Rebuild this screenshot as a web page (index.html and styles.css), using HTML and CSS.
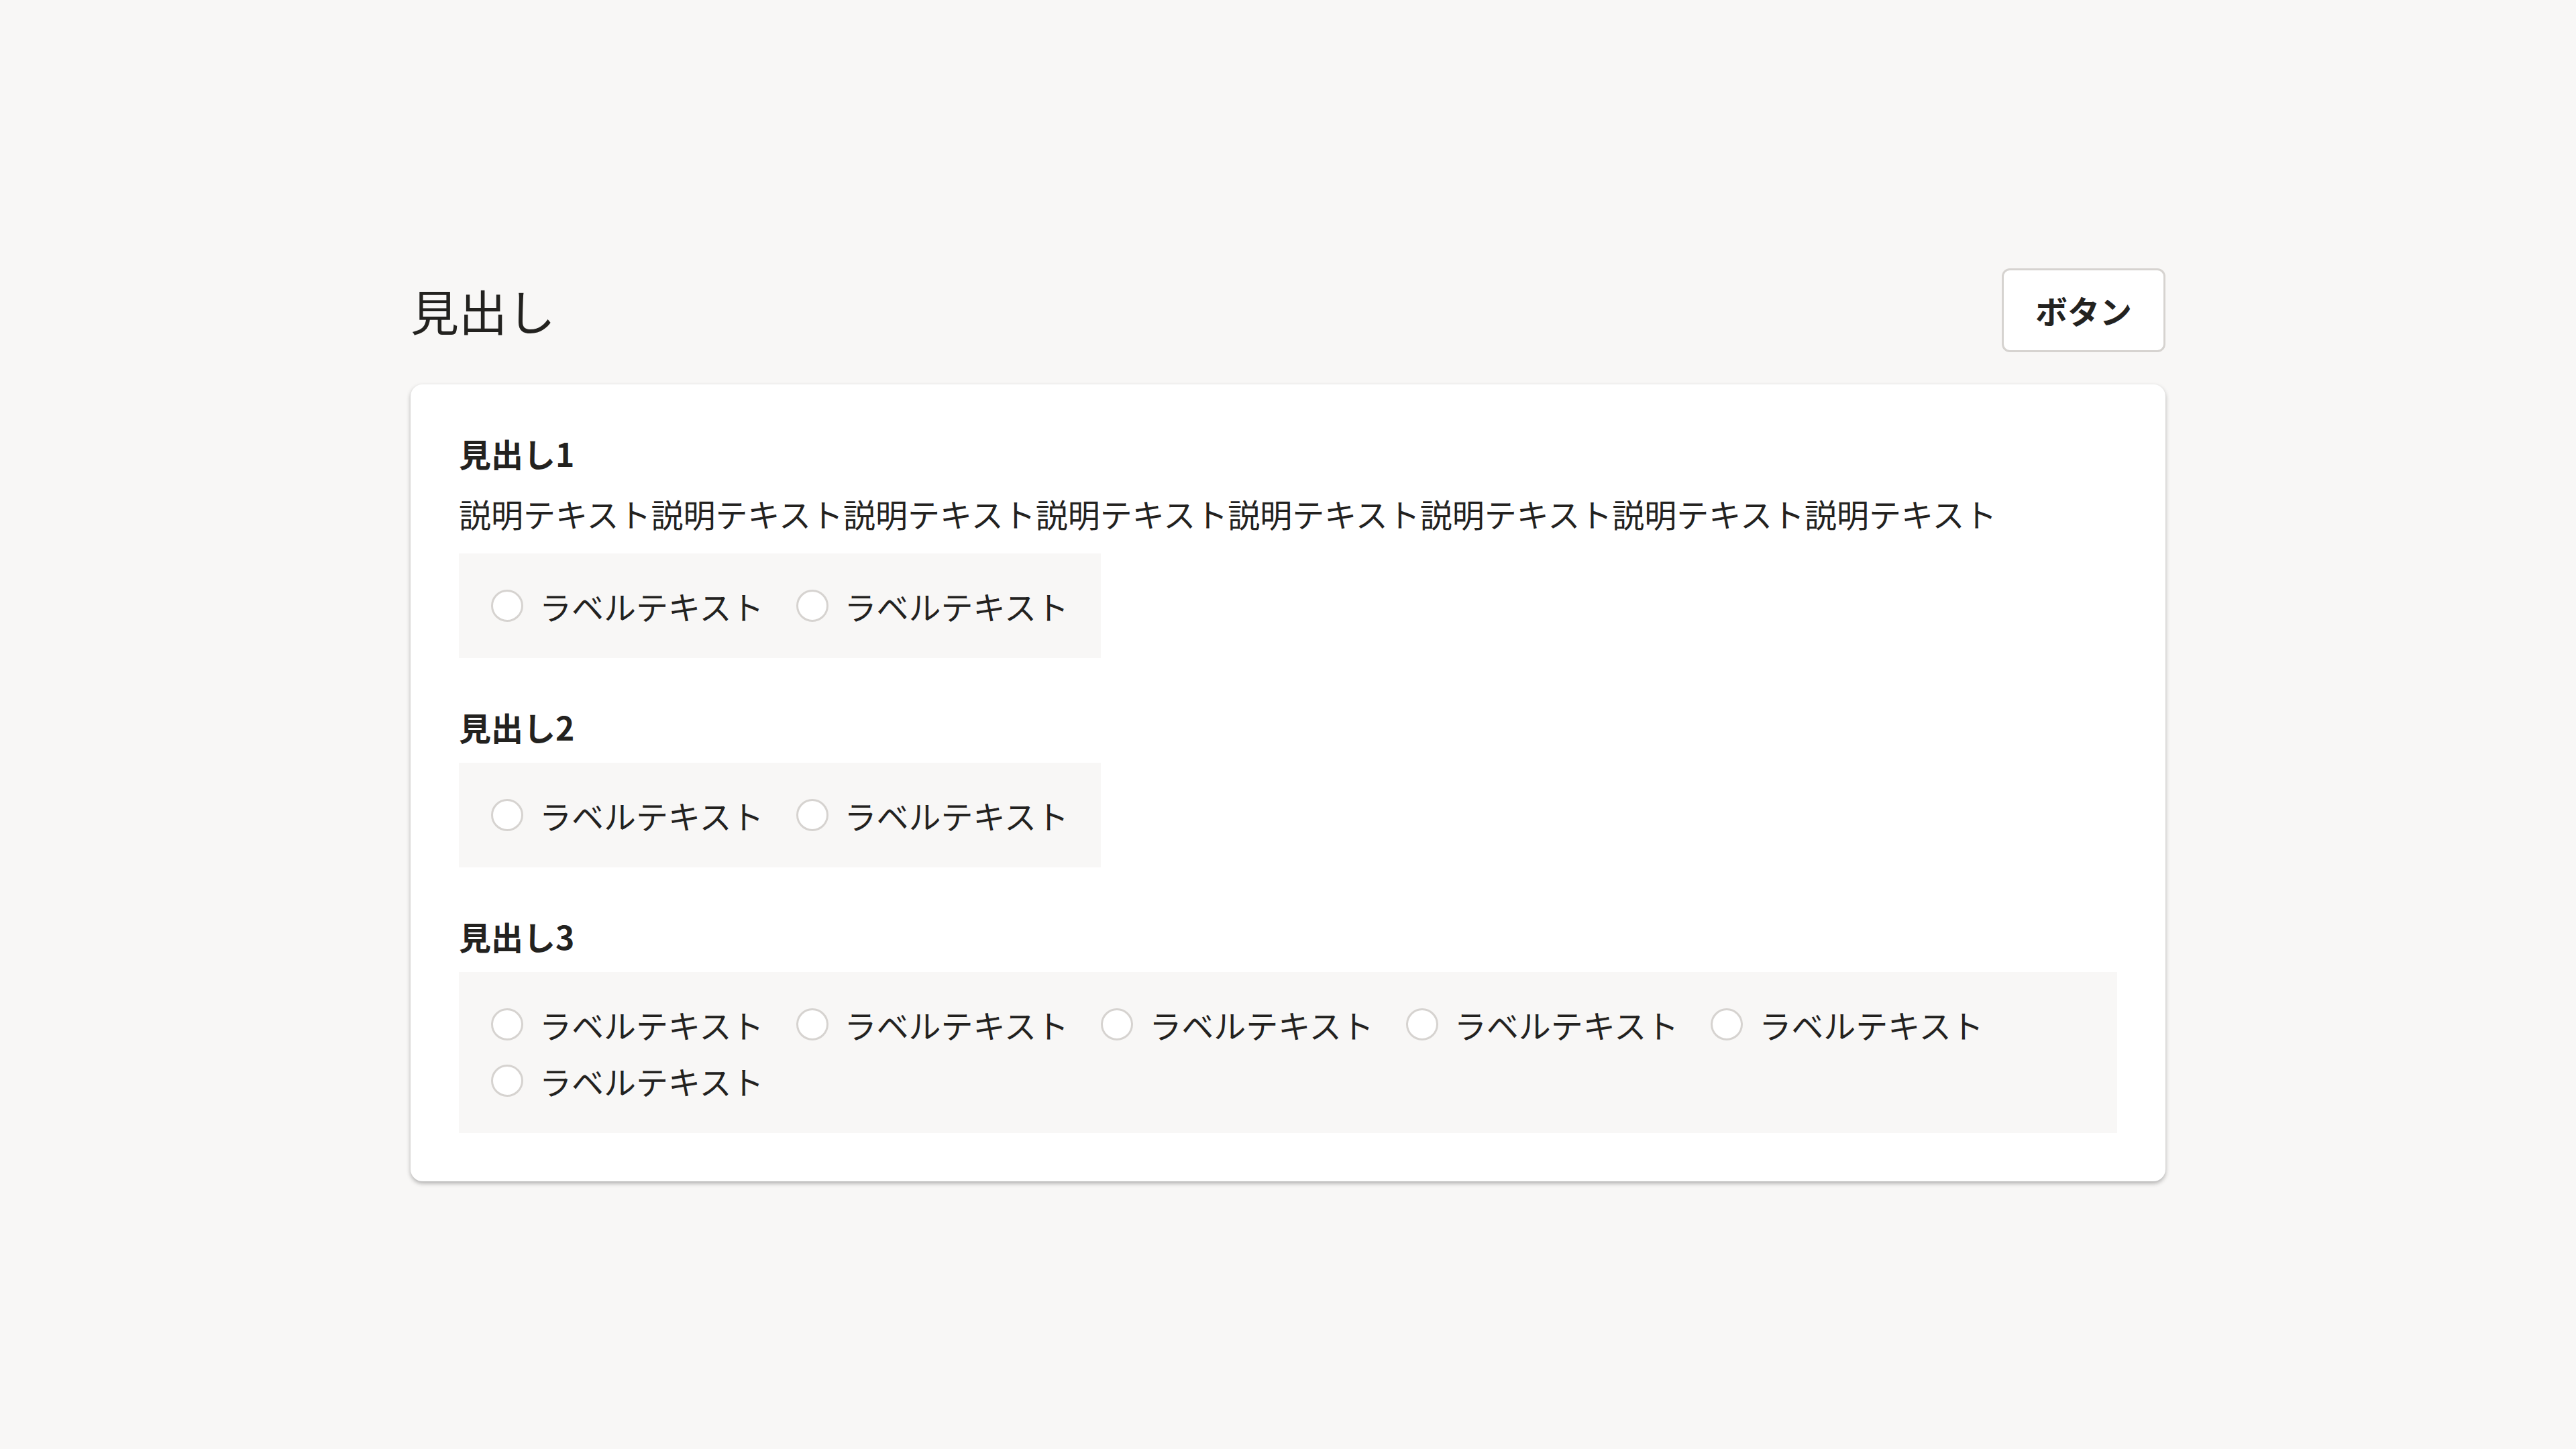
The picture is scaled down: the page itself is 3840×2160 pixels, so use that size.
FILE: index.html
```html
<!DOCTYPE html>
<html lang="ja">
<head>
    <meta charset="UTF-8">
    <meta name="viewport" content="width=device-width, initial-scale=1.0">
    <title>見出し</title>
    <link rel="stylesheet" href="styles.css">
</head>
<body>
    <div class="page">
        <div class="container">
            <div class="page-header">
                <h1>見出し</h1>
                <button type="button" class="button">ボタン</button>
            </div>

            <div class="card">
                <section class="section">
                    <h2>見出し1</h2>
                    <p class="description">説明テキスト説明テキスト説明テキスト説明テキスト説明テキスト説明テキスト説明テキスト説明テキスト</p>
                    <div class="radio-group">
                        <label class="radio"><input type="radio" name="q1"><span>ラベルテキスト</span></label>
                        <label class="radio"><input type="radio" name="q1"><span>ラベルテキスト</span></label>
                    </div>
                </section>

                <section class="section">
                    <h2>見出し2</h2>
                    <div class="radio-group">
                        <label class="radio"><input type="radio" name="q2"><span>ラベルテキスト</span></label>
                        <label class="radio"><input type="radio" name="q2"><span>ラベルテキスト</span></label>
                    </div>
                </section>

                <section class="section">
                    <h2>見出し3</h2>
                    <div class="radio-group">
                        <label class="radio"><input type="radio" name="q3"><span>ラベルテキスト</span></label>
                        <label class="radio"><input type="radio" name="q3"><span>ラベルテキスト</span></label>
                        <label class="radio"><input type="radio" name="q3"><span>ラベルテキスト</span></label>
                        <label class="radio"><input type="radio" name="q3"><span>ラベルテキスト</span></label>
                        <label class="radio"><input type="radio" name="q3"><span>ラベルテキスト</span></label>
                        <label class="radio"><input type="radio" name="q3"><span>ラベルテキスト</span></label>
                    </div>
                </section>
            </div>
        </div>
    </div>
</body>
</html>
```

FILE: styles.css
```css
body {
    margin: 0;
    font-family: "Noto Sans CJK JP", "Noto Sans", sans-serif;
    color: #23221f;
    background-color: #f8f7f6;
}
.page {
    min-height: 100vh;
    display: flex;
    align-items: center;
    justify-content: center;
}
.container {
    width: 2616px;
}
.page-header {
    display: flex;
    justify-content: space-between;
    align-items: center;
    margin-bottom: 48px;
}
h1 {
    margin: 0;
    font-size: 72px;
    font-weight: normal;
    line-height: 1.25;
}
.button {
    box-sizing: border-box;
    height: 125px;
    padding: 0 47px;
    font-family: inherit;
    font-size: 48px;
    font-weight: bold;
    color: #23221f;
    background-color: #fff;
    border: 3px solid #d6d3d0;
    border-radius: 12px;
    cursor: pointer;
}
.card {
    display: flex;
    flex-direction: column;
    gap: 72px;
    padding: 72px;
    background-color: #fff;
    border-radius: 18px;
    box-shadow: 0 3px 6px rgba(3, 3, 2, 0.3);
}
.section {
    display: flex;
    flex-direction: column;
    align-items: flex-start;
    gap: 24px;
}
h2 {
    margin: 0;
    font-size: 48px;
    font-weight: bold;
    line-height: 1.25;
}
.description {
    margin: 0;
    font-size: 48px;
    line-height: 1.5;
}
.radio-group {
    box-sizing: border-box;
    display: flex;
    flex-wrap: wrap;
    gap: 24px 48px;
    max-width: 100%;
    padding: 48px;
    background-color: #f8f7f6;
}
.radio {
    display: flex;
    align-items: center;
    gap: 24px;
    font-size: 48px;
    line-height: 60px;
    cursor: pointer;
}
.radio input {
    appearance: none;
    box-sizing: border-box;
    width: 48px;
    height: 48px;
    margin: 0;
    background-color: #fff;
    border: 3px solid #d6d3d0;
    border-radius: 50%;
}
```
